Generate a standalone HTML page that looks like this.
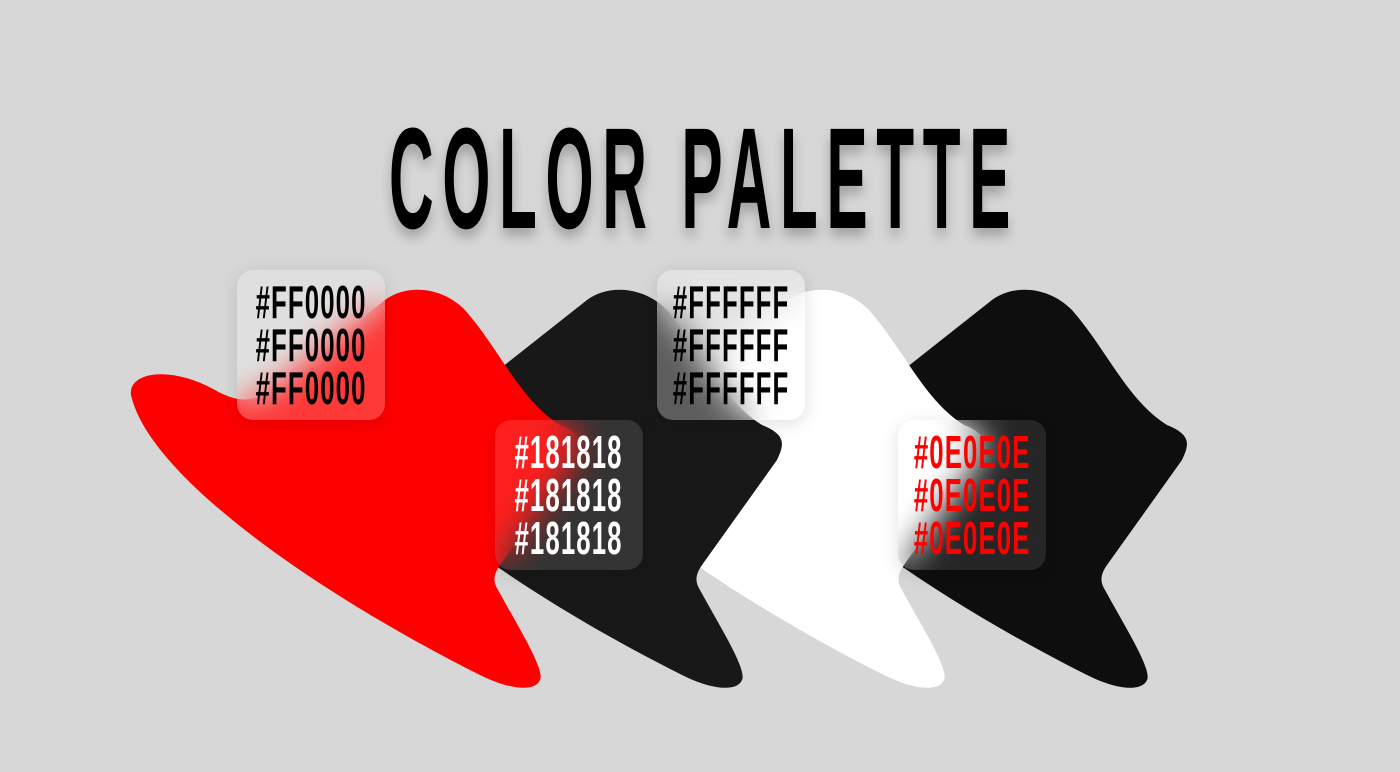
<!DOCTYPE html>
<html><head><meta charset="utf-8"><style>
html,body{margin:0;padding:0}
body{width:1400px;height:772px;background:#d7d7d7;position:relative;overflow:hidden;font-family:"Liberation Sans",sans-serif}
svg{position:absolute;left:0;top:0}
.title{position:absolute;left:704px;top:99px;font-weight:bold;font-size:144px;line-height:160px;letter-spacing:20px;transform-origin:0 0;transform:scaleX(0.43) translateX(-50%);color:#000;text-shadow:0 8px 18px rgba(0,0,0,0.25);white-space:nowrap}
.card{position:absolute;width:148px;height:150px;border-radius:16px;backdrop-filter:blur(16px);-webkit-backdrop-filter:blur(16px);box-shadow:0 4px 18px rgba(0,0,0,0.12);display:flex;flex-direction:column;align-items:center;justify-content:center}
.card div{font-size:46px;font-weight:bold;line-height:43px;height:43px;transform:scaleX(0.56);white-space:nowrap;letter-spacing:2px}
</style></head><body>
<svg width="1400" height="772" viewBox="0 0 1400 772">
<defs>
<path id="s" d="M131 395 C128 372,170 365,215 390 C250 410,265 395,290 375 L385 300 C405 285,440 285,465 310 C500 350,520 400,560 425 C585 435,582 445,575 460 L500 565 C493 575,493 582,498 590 C520 630,545 670,540 680 C535 692,510 690,480 675 C330 600,150 480,131 395 Z"/>
</defs>
<use href="#s" x="607" fill="#0e0e0e"/>
<use href="#s" x="404" fill="#ffffff"/>
<use href="#s" x="202" fill="#181818"/>
<use href="#s" x="0" fill="#ff0000"/>
</svg>
<div class="title">COLOR PALETTE</div>
<div class="card" style="left:237px;top:270px;background:rgba(255,255,255,0.22);color:#000"><div>#FF0000</div><div>#FF0000</div><div>#FF0000</div></div>
<div class="card" style="left:495px;top:420px;background:rgba(255,255,255,0.12);color:#fff"><div>#181818</div><div>#181818</div><div>#181818</div></div>
<div class="card" style="left:657px;top:270px;background:rgba(255,255,255,0.3);color:#000"><div>#FFFFFF</div><div>#FFFFFF</div><div>#FFFFFF</div></div>
<div class="card" style="left:898px;top:420px;background:rgba(255,255,255,0.1);color:#ff0000"><div>#0E0E0E</div><div>#0E0E0E</div><div>#0E0E0E</div></div>
</body></html>
